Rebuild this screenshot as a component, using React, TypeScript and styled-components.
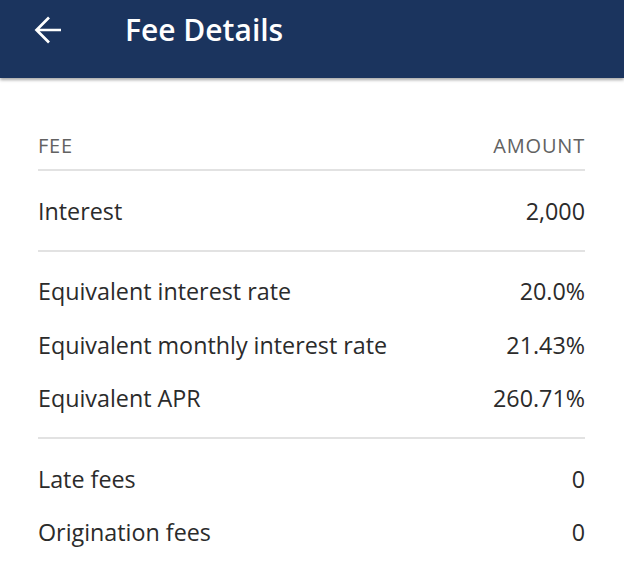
import React from 'react'
import styled, { createGlobalStyle } from 'styled-components'

const GlobalStyle = createGlobalStyle`
  body {
    margin: 0;
    background: #ffffff;
    font-family: 'Open Sans', 'Noto Sans', sans-serif;
  }
`

interface iRow {
  label: string
  value: string
}

const groups: iRow[][] = [
  [{ label: 'Interest', value: '2,000' }],
  [
    { label: 'Equivalent interest rate', value: '20.0%' },
    { label: 'Equivalent monthly interest rate', value: '21.43%' },
    { label: 'Equivalent APR', value: '260.71%' },
  ],
  [
    { label: 'Late fees', value: '0' },
    { label: 'Origination fees', value: '0' },
  ],
]

const App: React.FC = () => {
  return (
    <>
      <GlobalStyle />
      <Page>
        <Header>
          <BackButton aria-label='Back'>
            <svg width='28' height='28' viewBox='0 0 28 28' fill='none'>
              <path d='M27 14H2.5M15 1.5L2.5 14L15 26.5' stroke='#ffffff' strokeWidth='2.7' />
            </svg>
          </BackButton>
          <Title>Fee Details</Title>
        </Header>
        <Table>
          <HeadRow>
            <span>FEE</span>
            <span>AMOUNT</span>
          </HeadRow>
          {groups.map((g, i) => (
            <Group key={i} last={i === groups.length - 1}>
              {g.map((r) => (
                <Row key={r.label}>
                  <span>{r.label}</span>
                  <span>{r.value}</span>
                </Row>
              ))}
            </Group>
          ))}
        </Table>
      </Page>
    </>
  )
}

export default App

const Page = styled.div`
  width: 624px;
  height: 565px;
  overflow: hidden;
  background: #ffffff;
`

const Header = styled.div`
  height: 78px;
  background: #1b345e;
  display: flex;
  align-items: center;
  padding: 0 0 18px 34px;
  box-sizing: border-box;
  box-shadow: 0 2px 3px rgba(0, 0, 0, 0.35);
  position: relative;
`

const BackButton = styled.div`
  width: 28px;
  height: 28px;
  display: flex;
  align-items: center;
`

const Title = styled.h1`
  margin: 0 0 0 63px;
  color: #ffffff;
  font-size: 30px;
  font-weight: 600;
  line-height: 1;
`

const Table = styled.div`
  padding: 0 39px 0 38px;
  display: flex;
  flex-direction: column;
`

const HeadRow = styled.div`
  display: flex;
  justify-content: space-between;
  align-items: center;
  padding-top: 51px;
  padding-bottom: 6px;
  height: 34px;
  box-sizing: content-box;
  font-size: 20px;
  line-height: 1;
  letter-spacing: 0.8px;
  color: #626262;
  border-bottom: 2px solid #e2e2e2;
`

const Group = styled.div<{ last: boolean }>`
  display: flex;
  flex-direction: column;
  padding: 13px 0 ${(p) => (p.last ? '0' : '12px')};
  border-bottom: ${(p) => (p.last ? 'none' : '2px solid #e2e2e2')};
`

const Row = styled.div`
  display: flex;
  justify-content: space-between;
  align-items: center;
  height: 53.5px;
  font-size: 23.3px;
  color: #2b2b2b;
`
